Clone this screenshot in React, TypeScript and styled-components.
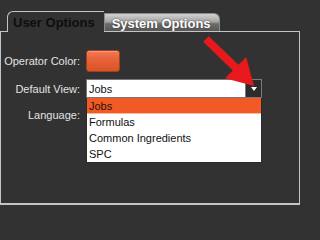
import React from "react";
import styled, { createGlobalStyle } from "styled-components";

const Global = createGlobalStyle`
  html, body { margin: 0; padding: 0; background: #323232; }
  * { box-sizing: border-box; }
`;

const Frame = styled.div`
  position: relative;
  width: 300px;
  height: 205px;
  background: #323232;
  display: flex;
  flex-direction: column;
  font-family: "Liberation Sans", Arial, sans-serif;
  overflow: hidden;
`;

const TabBar = styled.div`
  height: 32px;
  display: flex;
  align-items: flex-end;
  padding-left: 7px;
  border-bottom: 1px solid #c4c4c4;
`;

const Tab = styled.div<{ $active?: boolean }>`
  display: flex;
  align-items: center;
  font-weight: bold;
  font-size: 13px;
  white-space: nowrap;
  ${(p) =>
    p.$active
      ? `
    height: 21px;
    margin-bottom: -1px;
    padding: 1px 9px 0 5px;
    background: #323232;
    color: #0e0e0e;
    border-top: 1px solid #c4c4c4;
    border-left: 1px solid #c4c4c4;
    border-top-left-radius: 6px;
  `
      : `
    height: 18px;
    padding: 1px 8px 0 7px;
    color: #ffffff;
    text-shadow: 0 0 2px #333;
    background: linear-gradient(to bottom, #d2d2d2 0%, #a6a6a6 45%, #6c6c6c 58%, #575757 100%);
    border: 1px solid #8a8a8a;
    border-bottom: none;
    border-top-right-radius: 6px;
  `}
`;

const Panel = styled.div`
  flex: 1;
  border-left: 1px solid #c4c4c4;
  border-right: 1px solid #c4c4c4;
  border-bottom: 2px solid #c4c4c4;
  padding-top: 18px;
`;

const Form = styled.div`
  display: grid;
  grid-template-columns: 79px 176px;
  column-gap: 6px;
  row-gap: 7px;
  align-items: center;
`;

const Label = styled.div`
  text-align: right;
  font-size: 11px;
  color: #e2e2e2;
  white-space: nowrap;
`;

const Swatch = styled.div`
  width: 34px;
  height: 22px;
  border-radius: 3px;
  border: 1px solid #a5401d;
  background: linear-gradient(to bottom, #f07a55 0%, #e8643a 40%, #da5227 100%);
  box-shadow: inset 0 1px 0 rgba(255, 255, 255, 0.25);
`;

const SelectWrap = styled.div`
  position: relative;
  height: 19px;
  display: flex;
`;

const SelectField = styled.div`
  flex: 1;
  background: #ffffff;
  border: 1px solid #777;
  border-right: none;
  font-size: 11px;
  color: #111;
  display: flex;
  align-items: center;
  padding-left: 2px;
`;

const SelectButton = styled.div`
  width: 17px;
  background: #2c2c2c;
  border: 1px solid #7a7a7a;
  display: flex;
  align-items: center;
  justify-content: center;
`;

const Triangle = styled.div`
  width: 0;
  height: 0;
  border-left: 3.5px solid transparent;
  border-right: 3.5px solid transparent;
  border-top: 4px solid #ffffff;
`;

const Menu = styled.div`
  position: absolute;
  left: 0;
  top: 19px;
  width: 176px;
  background: #ffffff;
  border: 1px solid #2a2a2a;
  border-top: none;
  z-index: 2;
`;

const MenuItem = styled.div<{ $selected?: boolean }>`
  height: 16px;
  display: flex;
  align-items: center;
  padding-left: 2px;
  font-size: 11px;
  color: ${(p) => (p.$selected ? "#2a1208" : "#111")};
  background: ${(p) => (p.$selected ? "#f15a24" : "#ffffff")};
  border-bottom: ${(p) => (p.$selected ? "1px solid #f7b79c" : "none")};
`;

const Overlay = styled.svg`
  position: absolute;
  left: 0;
  top: 0;
  pointer-events: none;
  z-index: 5;
`;

const items = ["Jobs", "Formulas", "Common Ingredients", "SPC"];

export default function App() {
  return (
    <>
      <Global />
      <Frame>
        <TabBar>
          <Tab $active>User Options</Tab>
          <Tab>System Options</Tab>
        </TabBar>
        <Panel>
          <Form>
            <Label>Operator Color:</Label>
            <Swatch />
            <Label>Default View:</Label>
            <SelectWrap>
              <SelectField>Jobs</SelectField>
              <SelectButton>
                <Triangle />
              </SelectButton>
              <Menu>
                {items.map((it, i) => (
                  <MenuItem key={it} $selected={i === 0}>
                    {it}
                  </MenuItem>
                ))}
              </Menu>
            </SelectWrap>
            <Label>Language:</Label>
            <SelectWrap>
              <SelectField />
              <SelectButton>
                <Triangle />
              </SelectButton>
            </SelectWrap>
          </Form>
        </Panel>
        <Overlay width="300" height="205" viewBox="0 0 300 205">
          <polygon
            points="208.8,36.2 238.4,64.8 246.2,57 254,86 225,78.2 232.8,70.4 203.2,41.8"
            fill="#e8191c"
          />
        </Overlay>
      </Frame>
    </>
  );
}
